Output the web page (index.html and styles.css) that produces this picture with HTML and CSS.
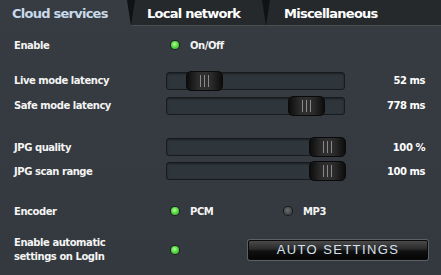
FILE: index.html
```html
<!DOCTYPE html>
<html>
<head>
<meta charset="utf-8">
<link rel="stylesheet" href="styles.css">
</head>
<body>
<div class="panel">
  <div class="tabs">
    <div class="tab active">Cloud services</div>
    <div class="tab">Local network</div>
    <div class="tab last">Miscellaneous</div>
  </div>
  <div class="content">
    <div class="row r-enable">
      <div class="label">Enable</div>
      <div class="control"><span class="led on"></span><span class="opt">On/Off</span></div>
    </div>
    <div class="group g-latency">
      <div class="row r25">
        <div class="label">Live mode latency</div>
        <div class="control"><div class="track"><div class="thumb" style="left:19px"><i></i><i></i><i></i></div></div></div>
        <div class="value">52 ms</div>
      </div>
      <div class="row r25">
        <div class="label">Safe mode latency</div>
        <div class="control"><div class="track"><div class="thumb" style="left:121px"><i></i><i></i><i></i></div></div></div>
        <div class="value">778 ms</div>
      </div>
    </div>
    <div class="group g-jpg">
      <div class="row">
        <div class="label">JPG quality</div>
        <div class="control"><div class="track"><div class="thumb" style="left:142px"><i></i><i></i><i></i></div></div></div>
        <div class="value">100 %</div>
      </div>
      <div class="row">
        <div class="label">JPG scan range</div>
        <div class="control"><div class="track"><div class="thumb" style="left:142px"><i></i><i></i><i></i></div></div></div>
        <div class="value">100 ms</div>
      </div>
    </div>
    <div class="row r-encoder">
      <div class="label">Encoder</div>
      <div class="radio">
        <div class="radio-item"><span class="led on"></span><span class="opt">PCM</span></div>
        <div class="radio-item"><span class="led off"></span><span class="opt">MP3</span></div>
      </div>
    </div>
    <div class="row r-auto">
      <div class="label two">Enable automatic<br>settings on LogIn</div>
      <div class="control auto-led"><span class="led on"></span></div>
      <button class="btn">AUTO SETTINGS</button>
    </div>
  </div>
</div>
</body>
</html>
```

FILE: styles.css
```css
html, body {
  margin: 0;
  padding: 0;
}
body {
  width: 441px;
  height: 275px;
  overflow: hidden;
  background: #353b40;
  font-family: "DejaVu Sans", Verdana, sans-serif;
  color: #f2f2f2;
}
.panel {
  width: 441px;
  height: 275px;
  background: linear-gradient(#363c41, #33393e);
}
.tabs {
  display: flex;
  height: 26px;
}
.tab {
  position: relative;
  flex-shrink: 0;
  height: 26px;
  box-sizing: border-box;
  font-weight: bold;
  font-size: 13px;
  letter-spacing: -0.75px;
  line-height: 27px;
  color: #ffffff;
  background: #26292c;
  border-bottom: 1px solid #4a4f53;
  padding-left: 16px;
  width: 135px;
}
.tab.active {
  background: transparent;
  color: #c9d9ea;
  border-bottom: 1px solid transparent;
  width: 131px;
  padding-left: 12px;
}
.tab.last {
  flex: 1;
  padding-left: 18px;
}
.tab::before {
  content: "";
  position: absolute;
  left: -4px;
  top: 0;
  width: 0;
  height: 0;
  border-left: 4px solid transparent;
  border-right: 4px solid transparent;
  border-top: 26px solid #101213;
}
.tab.active::before {
  display: none;
}
.content {
  display: flex;
  flex-direction: column;
}
.row {
  display: flex;
  align-items: center;
  height: 24px;
}
.r25 {
  height: 25px;
}
.r-enable {
  margin-top: 7px;
}
.g-latency {
  margin-top: 11px;
}
.g-jpg {
  margin-top: 17px;
}
.r-encoder {
  margin-top: 16px;
}
.r-auto {
  margin-top: 12px;
  height: 30px;
}
.label {
  flex-shrink: 0;
  width: 152px;
  padding-left: 14px;
  font-size: 10px;
  letter-spacing: -0.45px;
  font-weight: bold;
  color: #f4f4f4;
}
.label.two {
  line-height: 14px;
}
.control {
  flex-shrink: 0;
  width: 179px;
  display: flex;
  align-items: center;
}
.value {
  width: 80px;
  text-align: right;
  font-size: 10px;
  letter-spacing: -0.45px;
  font-weight: bold;
  color: #ffffff;
}
.led {
  flex-shrink: 0;
  display: inline-block;
  width: 8px;
  height: 8px;
  border-radius: 50%;
  margin-left: 5px;
  box-shadow: 0 0 0 1px rgba(0,0,0,0.45);
}
.led.on {
  background: radial-gradient(circle at 45% 40%, #b8ff9a 0%, #5fe04a 40%, #2b9a20 100%);
}
.led.off {
  background: radial-gradient(circle at 45% 40%, #6a6e71 0%, #45494c 60%, #2f3234 100%);
  box-shadow: 0 0 0 1px rgba(0,0,0,0.6);
}
.opt {
  margin-left: 11px;
  font-size: 10px;
  letter-spacing: -0.45px;
  font-weight: bold;
  color: #f4f4f4;
}
.radio {
  display: flex;
  align-items: center;
}
.radio-item {
  flex-shrink: 0;
  display: flex;
  align-items: center;
  width: 113px;
}
.track {
  position: relative;
  width: 179px;
  height: 18px;
  box-sizing: border-box;
  border-radius: 3px;
  background: #2f363b;
  border: 1px solid #181b1d;
  box-shadow: inset 0 1px 2px rgba(0,0,0,0.45);
}
.thumb {
  position: absolute;
  top: -2px;
  width: 37px;
  height: 20px;
  box-sizing: border-box;
  border-radius: 5px;
  background: linear-gradient(90deg, #0d0d0d 0%, #2a2a2a 30%, #303030 50%, #2a2a2a 70%, #0d0d0d 100%);
  border: 1px solid #0a0a0a;
  display: flex;
  justify-content: center;
  align-items: center;
  gap: 3px;
}
.thumb i {
  display: block;
  width: 1px;
  height: 12px;
  background: #8a8a8a;
}
.auto-led {
  width: 82px;
}
.btn {
  flex-shrink: 0;
  width: 180px;
  height: 20px;
  padding: 0;
  margin: 0;
  border: 1px solid #0a0a0a;
  border-radius: 2px;
  background: linear-gradient(#4a4a4a 0%, #2a2a2a 45%, #111 55%, #050505 100%);
  box-shadow: 0 0 0 1px #5a6064;
  font-family: "Liberation Sans", Arial, sans-serif;
  font-size: 13px;
  letter-spacing: 1.4px;
  color: #d6e2ee;
  line-height: 18px;
}
```
